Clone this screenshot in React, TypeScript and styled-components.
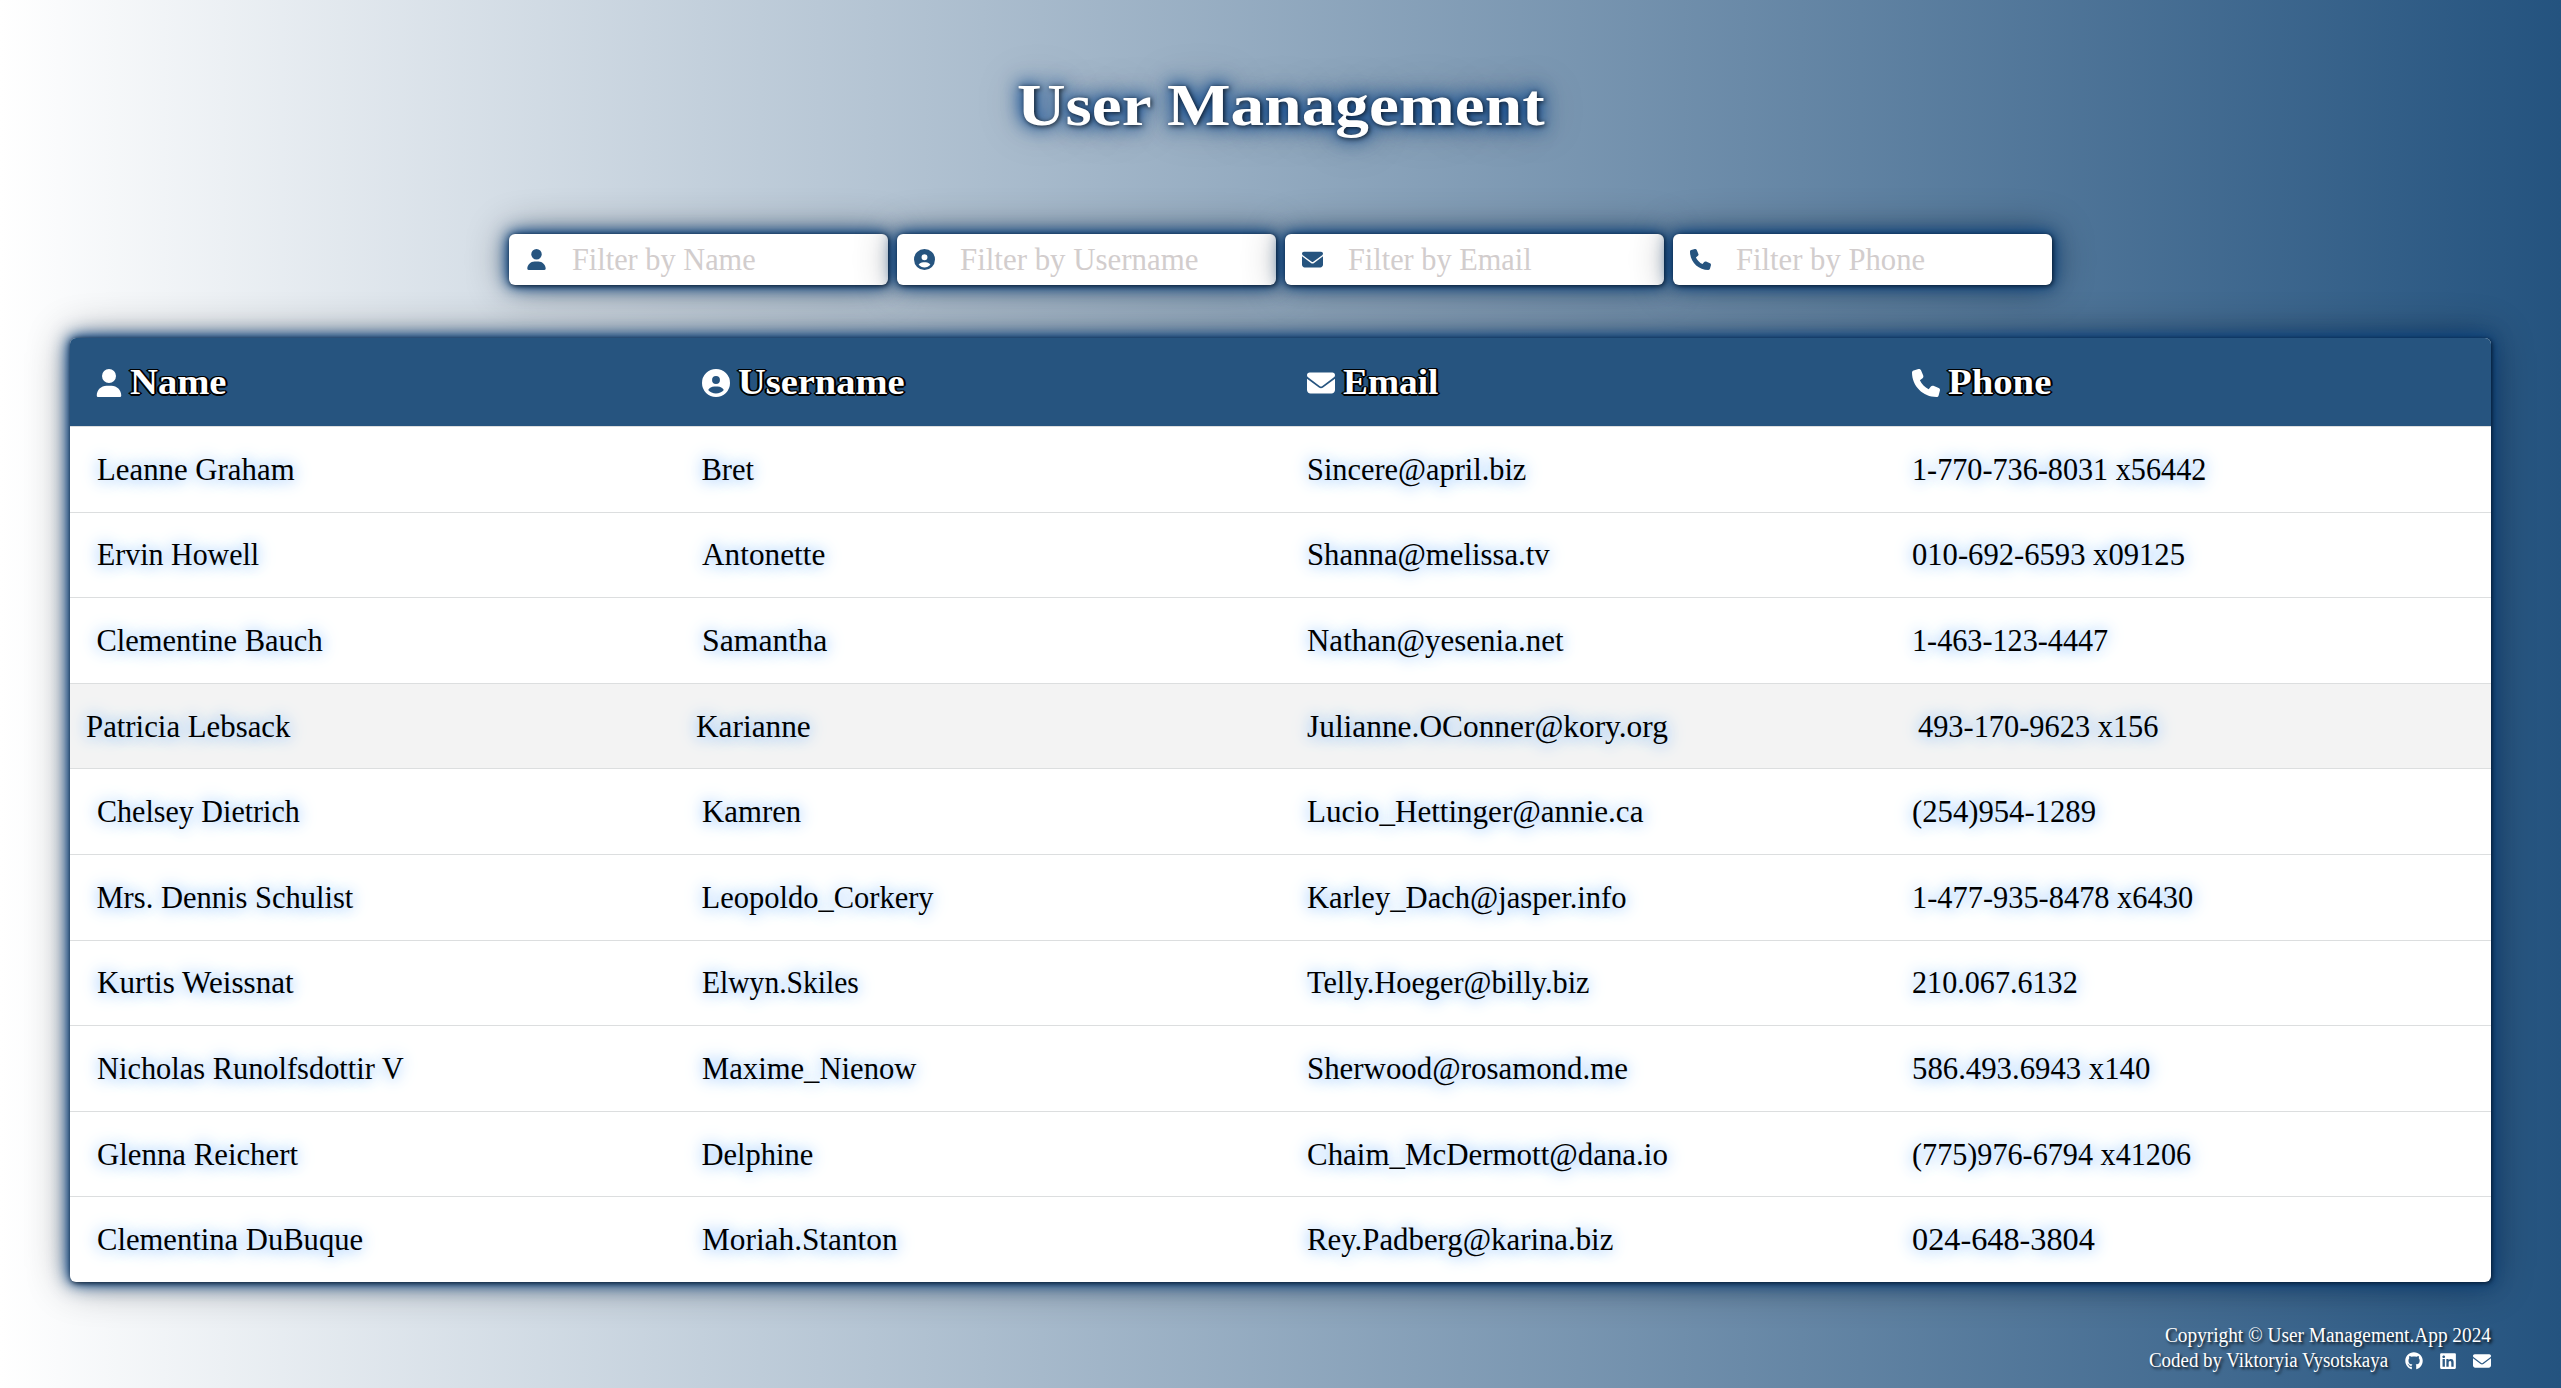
import React, { useLayoutEffect, useRef, useState } from 'react';
import styled, { createGlobalStyle } from 'styled-components';
import { FaUser, FaCircleUser, FaEnvelope, FaPhone, FaGithub, FaLinkedin } from 'react-icons/fa6';

const GlobalStyle = createGlobalStyle`
  * { box-sizing: border-box; }
  body {
    margin: 0;
    font-family: Georgia, 'Liberation Serif', serif;
    background: #fff;
  }
`;

const glow = '1px 1px 5px rgba(0, 0, 0, 0.7), 0 0 12px #0c4686, 0 0 20px #0c4686, 0 0 42px rgba(0, 0, 0, 0.45)';

const Page = styled.div`
  height: 1388px;
  padding: 0 70px;
  display: flex;
  flex-direction: column;
  align-items: center;
  background: linear-gradient(90deg, #fff 0%, #24537f 100%);
  overflow: hidden;
`;

const Title = styled.h1`
  margin: 67px 0 0;
  height: 75px;
  line-height: 76px;
  font-size: 59px;
  font-weight: 700;
  color: #fff;
  white-space: nowrap;
  text-shadow: 1px 1px 5px rgba(0, 0, 0, 0.8), 0 0 14px #0d4a92, 0 0 20px #0d4a92, 0 0 40px rgba(0, 0, 0, 0.35);
`;

const Filters = styled.div`
  margin-top: 92px;
  display: flex;
  gap: 9px;
`;

const Field = styled.label`
  width: 379px;
  height: 51px;
  padding-left: 17px;
  display: flex;
  align-items: center;
  background: #fff;
  border-radius: 6px;
  color: #26547f;
  box-shadow: ${glow};
`;

const FieldIcon = styled.span`
  width: 46px;
  display: flex;
  font-size: 21px;
`;

const Placeholder = styled.span`
  font-size: 30.5px;
  line-height: 48px;
  color: #d2cdcd;
  white-space: nowrap;
`;

const Table = styled.div`
  margin-top: 53px;
  width: 2421px;
  border-radius: 6px;
  background: #fff;
  box-shadow: ${glow};
`;

const Columns = styled.div`
  display: grid;
  grid-template-columns: 605px 605.5px 605px 604px;
  align-items: center;
  padding-left: 26.5px;
`;

const Head = styled(Columns)`
  height: 88px;
  padding-top: 1px;
  background: #26547f;
  border-radius: 6px 6px 0 0;
  color: #fff;
`;

const HeadCell = styled.div`
  display: flex;
  align-items: center;
  gap: 8px;
  font-size: 35px;
  line-height: 40px;
  font-weight: 700;
  svg { width: auto; height: 28px; }
  &:first-child { margin-left: -2px; }
  &:first-child svg { margin-right: -1px; }
`;

const HeadLabel = styled.span`
  text-shadow: -1px -1px 0 #000, 1px -1px 0 #000, -1px 1px 0 #000, 1px 1px 0 #000, 2px 0 0 #000,
    -2px 0 0 #000, 0 2px 0 #000;
`;

const Row = styled(Columns)<{ $active?: boolean }>`
  height: 85.6px;
  padding-top: 1px;
  border-top: 1px solid #dcdedf;
  background: ${(p) => (p.$active ? '#f3f3f3' : 'transparent')};
  &:last-child { border-radius: 0 0 6px 6px; }
`;

const Cell = styled.div<{ $shift?: number }>`
  font-size: 30.5px;
  line-height: 40px;
  color: #000;
  white-space: nowrap;
  margin-left: ${(p) => p.$shift || 0}px;
  text-shadow: 0 1px 14px #8cc0ff, 0 0 22px #b4d5ff;
`;

const Footer = styled.footer`
  width: 2421px;
  margin-top: 41px;
  display: flex;
  flex-direction: column;
  align-items: flex-end;
  color: #fff;
  font-size: 20px;
  line-height: 25px;
  text-shadow: 2px 2px 3px rgba(0, 0, 0, 0.8);
`;

const Credit = styled.div`
  display: flex;
  align-items: center;
`;

const Links = styled.span`
  display: flex;
  align-items: center;
  gap: 16px;
  margin: 1px 0 0 17px;
  font-size: 18px;
`;

const Frame = styled.span`
  display: inline-block;
  white-space: pre;
`;

const Glyphs = styled.span`
  display: inline-block;
  transform-origin: 0 50%;
`;

/* Stretches a label sideways so that its line takes the given width. */
function Fitted({ text, width }: { text: string; width: number }) {
  const ref = useRef<HTMLSpanElement>(null);
  const [scale, setScale] = useState(1);
  useLayoutEffect(() => {
    if (ref.current) setScale(width / ref.current.offsetWidth);
  }, [text, width]);
  return (
    <Frame style={{ width }}>
      <Glyphs ref={ref} style={{ transform: `scaleX(${scale})` }}>{text}</Glyphs>
    </Frame>
  );
}

const columns = [
  { label: 'Name', width: 96, field: 184, Icon: FaUser },
  { label: 'Username', width: 167, field: 238, Icon: FaCircleUser },
  { label: 'Email', width: 95, field: 184, Icon: FaEnvelope },
  { label: 'Phone', width: 103, field: 189, Icon: FaPhone },
];

type Entry = [string, number];

const users: Entry[][] = [
  [['Leanne Graham', 198], ['Bret', 53], ['Sincere@april.biz', 219], ['1-770-736-8031 x56442', 294]],
  [['Ervin Howell', 162], ['Antonette', 123], ['Shanna@melissa.tv', 243], ['010-692-6593 x09125', 273]],
  [['Clementine Bauch', 226], ['Samantha', 125], ['Nathan@yesenia.net', 257], ['1-463-123-4447', 196]],
  [['Patricia Lebsack', 204], ['Karianne', 115], ['Julianne.OConner@kory.org', 361], ['493-170-9623 x156', 240]],
  [['Chelsey Dietrich', 203], ['Kamren', 99], ['Lucio_Hettinger@annie.ca', 336], ['(254)954-1289', 184]],
  [['Mrs. Dennis Schulist', 257], ['Leopoldo_Corkery', 232], ['Karley_Dach@jasper.info', 320], ['1-477-935-8478 x6430', 281]],
  [['Kurtis Weissnat', 197], ['Elwyn.Skiles', 157], ['Telly.Hoeger@billy.biz', 283], ['210.067.6132', 166]],
  [['Nicholas Runolfsdottir V', 307], ['Maxime_Nienow', 214], ['Sherwood@rosamond.me', 321], ['586.493.6943 x140', 238]],
  [['Glenna Reichert', 201], ['Delphine', 112], ['Chaim_McDermott@dana.io', 361], ['(775)976-6794 x41206', 279]],
  [['Clementina DuBuque', 266], ['Moriah.Stanton', 196], ['Rey.Padberg@karina.biz', 306], ['024-648-3804', 183]],
];

const activeRow = 3;
const activeShifts = [-11, -6, 0, 6];

export default function App() {
  return (
    <>
      <GlobalStyle />
      <Page>
        <Title><Fitted text="User Management" width={528} /></Title>
        <Filters>
          {columns.map(({ label, field, Icon }) => (
            <Field key={label}>
              <FieldIcon><Icon /></FieldIcon>
              <Placeholder><Fitted text={`Filter by ${label}`} width={field} /></Placeholder>
            </Field>
          ))}
        </Filters>
        <Table>
          <Head>
            {columns.map(({ label, width, Icon }) => (
              <HeadCell key={label}>
                <Icon />
                <HeadLabel><Fitted text={label} width={width} /></HeadLabel>
              </HeadCell>
            ))}
          </Head>
          {users.map((user, r) => (
            <Row key={user[0][0]} $active={r === activeRow}>
              {user.map(([text, width], c) => (
                <Cell key={text} $shift={r === activeRow ? activeShifts[c] : 0}>
                  <Fitted text={text} width={width} />
                </Cell>
              ))}
            </Row>
          ))}
        </Table>
        <Footer>
          <div><Fitted text="Copyright © User Management.App 2024" width={326} /></div>
          <Credit>
            <Fitted text="Coded by Viktoryia Vysotskaya" width={239} />
            <Links><FaGithub /><FaLinkedin /><FaEnvelope /></Links>
          </Credit>
        </Footer>
      </Page>
    </>
  );
}
